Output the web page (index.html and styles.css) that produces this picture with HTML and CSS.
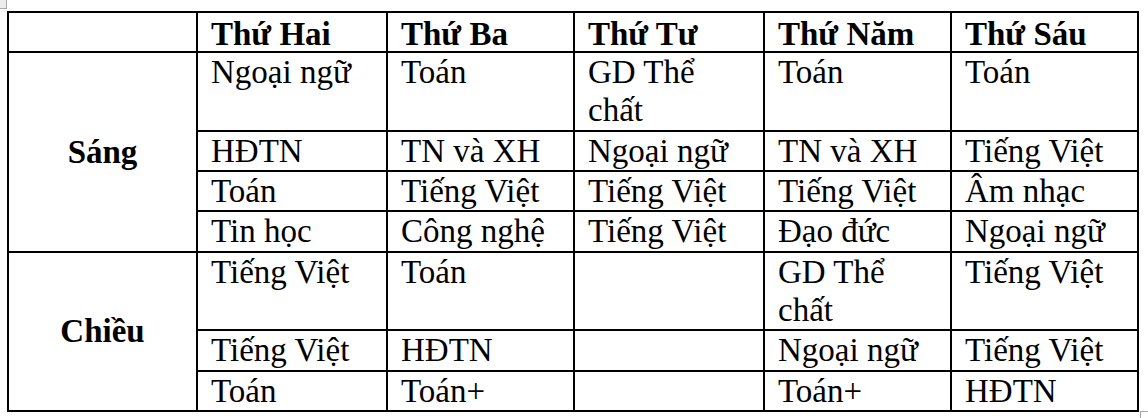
FILE: index.html
```html
<!DOCTYPE html>
<html>
<head>
<meta charset="utf-8">
<title>Thời khóa biểu</title>
<link rel="stylesheet" href="styles.css">
</head>
<body class="page">
<span class="mark mark-tl"></span>
<table class="tkb">
  <colgroup>
    <col class="c1"><col class="c2"><col class="c3"><col class="c4"><col class="c5"><col class="c6">
  </colgroup>
  <thead>
    <tr class="head">
      <th></th>
      <th>Thứ Hai</th>
      <th>Thứ Ba</th>
      <th>Thứ Tư</th>
      <th>Thứ Năm</th>
      <th>Thứ Sáu</th>
    </tr>
  </thead>
  <tbody>
    <tr>
      <th class="session" rowspan="4">Sáng</th>
      <td>Ngoại ngữ</td>
      <td>Toán</td>
      <td>GD Thể chất</td>
      <td>Toán</td>
      <td>Toán</td>
    </tr>
    <tr>
      <td>HĐTN</td>
      <td>TN và XH</td>
      <td>Ngoại ngữ</td>
      <td>TN và XH</td>
      <td>Tiếng Việt</td>
    </tr>
    <tr>
      <td>Toán</td>
      <td>Tiếng Việt</td>
      <td>Tiếng Việt</td>
      <td>Tiếng Việt</td>
      <td>Âm nhạc</td>
    </tr>
    <tr>
      <td>Tin học</td>
      <td>Công nghệ</td>
      <td>Tiếng Việt</td>
      <td>Đạo đức</td>
      <td>Ngoại ngữ</td>
    </tr>
    <tr>
      <th class="session" rowspan="3">Chiều</th>
      <td>Tiếng Việt</td>
      <td>Toán</td>
      <td></td>
      <td>GD Thể chất</td>
      <td>Tiếng Việt</td>
    </tr>
    <tr>
      <td>Tiếng Việt</td>
      <td>HĐTN</td>
      <td></td>
      <td>Ngoại ngữ</td>
      <td>Tiếng Việt</td>
    </tr>
    <tr>
      <td>Toán</td>
      <td>Toán+</td>
      <td></td>
      <td>Toán+</td>
      <td>HĐTN</td>
    </tr>
  </tbody>
</table>
<span class="mark mark-br"></span>
</body>
</html>
```

FILE: styles.css
```css
html, body {
  margin: 0;
  padding: 0;
  background: #ffffff;
}

.page {
  position: relative;
  width: 1148px;
  height: 418px;
  overflow: hidden;
  font-family: "Liberation Serif", "Times New Roman", serif;
  color: #000000;
}

.tkb {
  margin: 11px 0 0 7px;
  width: 1132px;
  table-layout: fixed;
  border-collapse: collapse;
  font-family: "Liberation Serif", "Times New Roman", serif;
  font-size: 33px;
  line-height: 38.33px;
}

.c1 { width: 189px; }
.c2 { width: 190px; }
.c3 { width: 187px; }
.c4 { width: 190px; }
.c5 { width: 187px; }
.c6 { width: 187px; }

.tkb th,
.tkb td {
  border: 2px solid #000000;
  padding: 0 12px 0 13px;
  vertical-align: top;
  text-align: left;
  font-weight: normal;
  overflow: hidden;
}

.tkb .head th {
  font-weight: bold;
  padding-top: 4px;
  line-height: 34px;
}

.tkb .session {
  font-weight: bold;
  text-align: center;
  vertical-align: middle;
  padding: 0;
}

.mark {
  position: absolute;
  display: block;
  box-sizing: border-box;
}

.mark-tl {
  left: 0;
  top: 0;
  width: 7px;
  height: 9px;
  background: #ececec;
  border-right: 1px solid #a8a8a8;
  border-bottom: 1px solid #a8a8a8;
}

.mark-br {
  left: 1140px;
  top: 411px;
  width: 8px;
  height: 7px;
  border-left: 1px solid #a8a8a8;
  border-top: 1px solid #a8a8a8;
}
```
